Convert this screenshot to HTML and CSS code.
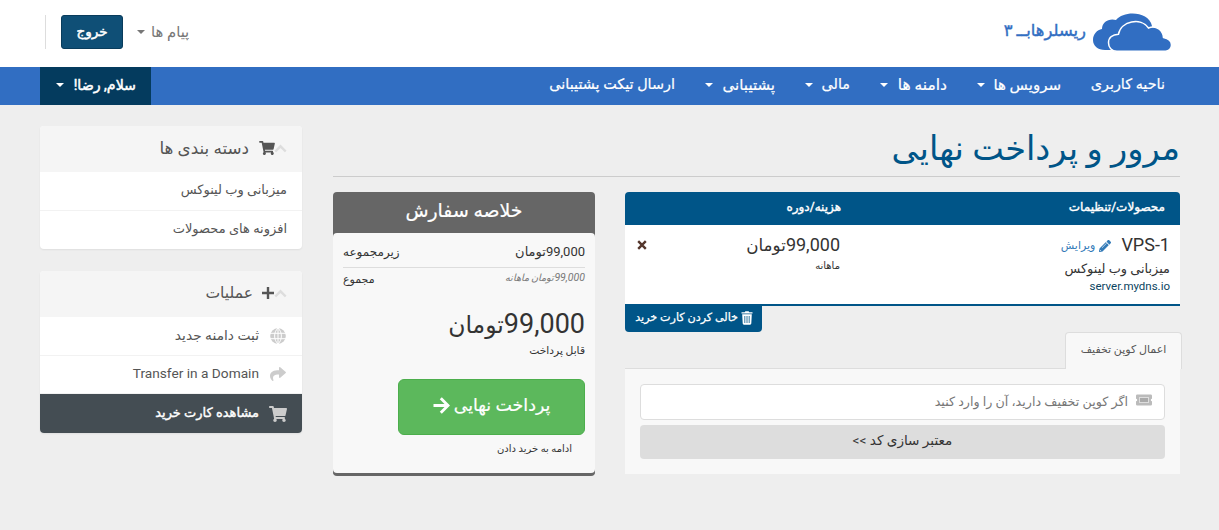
FILE: index.html
```html
<!DOCTYPE html>
<html lang="fa" dir="rtl">
<head>
<meta charset="utf-8">
<title>مرور و پرداخت نهایی</title>
<link rel="stylesheet" href="styles.css">
</head>
<body>
<svg class="defs" width="0" height="0">
  <symbol id="cart" viewBox="0 0 576 512"><path d="M528.12 301.319l47.273-208C578.806 78.301 567.391 64 551.99 64H159.208l-9.166-44.81C147.758 8.021 137.93 0 126.529 0H24C10.745 0 0 10.745 0 24v16c0 13.255 10.745 24 24 24h69.883l70.248 343.435C147.325 417.1 136 435.222 136 456c0 30.928 25.072 56 56 56s56-25.072 56-56c0-15.674-6.447-29.835-16.824-40h209.647C430.447 426.165 424 440.326 424 456c0 30.928 25.072 56 56 56s56-25.072 56-56c0-22.172-12.888-41.332-31.579-50.405l5.517-24.276c3.413-15.018-8.002-29.319-23.403-29.319H218.117l-6.545-32h293.145c11.206 0 20.92-7.754 23.403-18.681z"/></symbol>
  <symbol id="up" viewBox="0 0 13 9"><path d="M1.300 7.500 6.500 2.300l5.200 5.200" fill="none" stroke="currentColor" stroke-width="2.400"/></symbol>
</svg>
<header class="header">
  <div class="container header-row">
    <div class="brand">
      <svg class="clouds" viewBox="0 0 80 39"><path d="M1 27c0-6 4-10 9-11 0-7 7-11 14-9C32-3 57-2 60 13L56 30 19 37H13C6 37 1 33 1 27Z"/><path class="front" d="M25 38.300c-5.500 0-8.500-4-8.500-8.600 0-5 4-8.200 10-8.500C29 8 49 4 56.500 15c8-3 14.500 2.500 15 9.500 5 1 8 3.500 8 7.500s-3 6.300-6 6.300Z"/></svg>
      <span class="brand-name">ریسلرهابــ ۳</span>
    </div>
    <div class="top-nav">
      <a class="messages"><span>پیام ها</span><i class="caret"></i></a>
      <a class="logout"><span>خروج</span></a>
    </div>
  </div>
</header>
<nav class="nav">
  <div class="container nav-row">
    <ul class="menu">
      <li class="m-home"><span>ناحیه کاربری</span></li>
      <li class="m-services"><span>سرویس ها</span><i class="caret"></i></li>
      <li class="m-domains"><span>دامنه ها</span><i class="caret"></i></li>
      <li class="m-billing"><span>مالی</span><i class="caret"></i></li>
      <li class="m-support"><span>پشتیبانی</span><i class="caret"></i></li>
      <li class="m-ticket"><span>ارسال تیکت پشتیبانی</span></li>
    </ul>
    <div class="account"><span>سلام, رضا!</span><i class="caret"></i></div>
  </div>
</nav>
<main class="container page">
  <section class="checkout">
    <h1 class="title"><span>مرور و پرداخت نهایی</span></h1>
    <div class="columns">
      <div class="cart">
        <div class="cart-head"><span class="c1">محصولات/تنظیمات</span><span class="c2">هزینه/دوره</span></div>
        <div class="cart-row">
          <div class="product">
            <div class="name-line"><span class="name">VPS-1</span><a class="edit"><svg viewBox="0 0 512 512"><path d="M498 142l-45 45c-5 5-12 5-17 0L325 76c-5-5-5-12 0-17l45-45c19-19 49-19 68 0l60 60c19 19 19 49 0 68zM285 99L22 362 0 484c-3 17 11 31 28 28l122-22 263-263c5-5 5-12 0-17L302 99c-5-5-13-5-17 0z"/><path class="groove" d="M125 335 330 130M42 425l45 45" /></svg><span>ویرایش</span></a></div>
            <div class="group">میزبانی وب لینوکس</div>
            <div class="domain">server.mydns.io</div>
          </div>
          <div class="price"><div class="amount">99,000<span class="unit">تومان</span></div><div class="cycle">ماهانه</div></div>
          <svg class="remove" viewBox="0 0 10 10"><path d="M1.200 1.200l7.600 7.600M8.800 1.200 1.200 8.800"/></svg>
        </div>
        <div class="empty-row"><a class="empty"><svg viewBox="0 0 12 14"><path d="M.5 1.300h3.200L4.400.3h3.200l.7 1h3.200v1.200H.5zM1.200 3.300h9.600l-.5 9.300q-.1 1.100-1.200 1.100H2.900q-1.100 0-1.200-1.100z"/><path class="bars" d="M3.800 5v7M6 5v7M8.200 5v7"/></svg><span>خالی کردن کارت خرید</span></a></div>
        <div class="tabs"><div class="tab"><span>اعمال کوپن تخفیف</span></div></div>
        <div class="coupon">
          <div class="field"><svg viewBox="0 0 16 12"><path d="M1.300.5h13.400q1.300 0 1.300 1.300v3a1.200 1.200 0 0 0 0 2.400v3q0 1.300-1.300 1.300H1.300Q0 11.500 0 10.200v-3a1.200 1.200 0 0 0 0-2.400v-3Q0 .5 1.300.5z"/><rect x="3.500" y="3.500" width="9" height="5" fill="#aaa" stroke="#ddd" stroke-width="1"/></svg><span>اگر کوپن تخفیف دارید، آن را وارد کنید</span></div>
          <div class="validate"><span>معتبر سازی کد &gt;&gt;</span></div>
        </div>
      </div>
      <aside class="summary">
        <h2><span>خلاصه سفارش</span></h2>
        <div class="summary-body">
          <div class="line subtotal"><span>99,000تومان</span><span class="label">زیرمجموعه</span></div>
          <div class="line recurring"><em>99,000<span class="unit">تومان ماهانه</span></em><span class="label">مجموع</span></div>
          <div class="total">99,000<span class="unit">تومان</span></div>
          <div class="due">قابل پرداخت</div>
          <a class="pay"><span>پرداخت نهایی</span><svg viewBox="0 0 17 17"><path d="M.5 8.500h14M7.800 1.300l7.200 7.200-7.200 7.200"/></svg></a>
          <div class="continue">ادامه به خرید دادن</div>
        </div>
      </aside>
    </div>
  </section>
  <aside class="sidebar">
    <div class="panel">
      <h3><svg class="chev"><use href="#up"/></svg><svg class="head-cart"><use href="#cart"/></svg><span>دسته بندی ها</span></h3>
      <div class="item"><span>میزبانی وب لینوکس</span></div>
      <div class="item"><span>افزونه های محصولات</span></div>
    </div>
    <div class="panel actions">
      <h3><svg class="chev"><use href="#up"/></svg><svg class="plus" viewBox="0 0 12 12"><path d="M6 0v12M0 6h12"/></svg><span>عملیات</span></h3>
      <div class="item"><svg class="ico globe" viewBox="0 0 16 16"><circle cx="8" cy="8" r="7.800"/><path d="M0 5.300h16M0 10.700h16M8 0v16M8 0C3.500 4 3.500 12 8 16M8 0c4.500 4 4.500 12 0 16"/></svg><span class="register">ثبت دامنه جدید</span></div>
      <div class="item"><svg class="ico" viewBox="0 0 512 512"><path d="M503.700 189.800l-176-152C312.300 24.500 288 35.300 288 56v80C127.400 137.900 0 170.100 0 322.300c0 61.400 39.600 122.300 83.300 154.100 13.700 9.900 33.100-2.500 28.100-18.600C66.100 312.800 132.900 274.300 288 272.100V360c0 20.700 24.300 31.500 39.700 18.200l176-152c11.100-9.600 11.100-26.800 0-36.400z"/></svg><span class="latin">Transfer in a Domain</span></div>
      <div class="item active"><svg class="ico"><use href="#cart"/></svg><span>مشاهده کارت خرید</span></div>
    </div>
  </aside>
</main>
</body>
</html>
```
FILE: styles.css
```css
* { box-sizing: border-box; }
body { margin: 0; background: #eee; color: #333; font-family: Roboto, "DejaVu Sans", sans-serif; font-size: 14px; line-height: 20px; }
h1, h2, h3, ul { margin: 0; padding: 0; font-weight: 400; list-style: none; }
span, div { white-space: nowrap; }
svg { display: block; flex: none; fill: currentColor; }
.defs { position: absolute; }
.container { width: 1140px; margin-right: 39px; }
.caret { border: 4px solid transparent; border-top-color: currentColor; border-bottom: 0; }

.header { background: #fff; height: 67px; }
.header-row { display: flex; justify-content: space-between; }
.brand { display: flex; gap: 6px; padding: 13px 8px 0 0; color: #316ec2; }
.clouds { width: 80px; height: 39px; }
.front { stroke: #fff; stroke-width: 1.500; }
.brand-name { font-size: 16.400px; line-height: 20px; padding-top: 8px; -webkit-text-stroke: .4px; }
.top-nav { display: flex; height: 34px; margin-top: 15px; padding-left: 15px; border-left: 1px solid #ddd; margin-left: 5px; gap: 14px; }
.messages { display: flex; align-items: center; gap: 6px; color: #777; font-size: 14.800px; }
.logout { width: 62px; background: #0f4f76; border: 1px solid #093c5c; border-radius: 3px; color: #fff; text-align: center; line-height: 31px; font-size: 13.500px; -webkit-text-stroke: .5px; }

.nav { background: #316ec2; height: 38px; color: #fff; }
.nav-row { display: flex; justify-content: space-between; }
.menu { display: flex; }
.menu li { display: flex; align-items: center; justify-content: space-between; height: 35px; padding: 0 15px; font-size: 14.400px; -webkit-text-stroke: .2px; }
.m-home { width: 104px; }
.m-services { width: 114px; }
.menu .m-services { font-size: 15px; }
.m-domains { width: 97px; }
.menu .m-domains { font-size: 15.500px; }
.m-billing { width: 75px; }
.m-support { width: 100px; }
.menu .m-support { font-size: 15px; }
.m-ticket { width: 156px; }
.account { display: flex; align-items: center; gap: 10px; height: 38px; width: 111px; padding: 0 15px 3px; background: #043b5e; font-size: 14.200px; -webkit-text-stroke: .5px; }

.page { display: flex; gap: 31px; padding-top: 21px; }
.checkout { width: 847px; }
.title { height: 51px; border-bottom: 1px solid #ccc; margin-bottom: 15px; color: #058; font-size: 33.600px; line-height: 45px; }
.columns { display: flex; gap: 30px; align-items: flex-start; }
.cart { width: 555px; }
.cart-head { display: flex; height: 33px; padding: 0 15px; background: #058; color: #fff; border-radius: 4px 4px 0 0; font-size: 12px; line-height: 31px; -webkit-text-stroke: .4px; }
.c1 { width: 324px; }
.cart-row { display: flex; height: 81px; padding: 10px 10px 0; background: #fff; border-bottom: 2px solid #058; }
.product { width: 330px; }
.name-line { display: flex; align-items: center; gap: 10px; height: 20px; }
.name { font-size: 18px; }
.edit { display: flex; align-items: center; gap: 4px; color: #337ab7; font-size: 11px; padding-top: 1px; }
.edit svg { width: 12px; height: 12px; }
.groove { fill: none; stroke: #fff; stroke-width: 28; }
.group { font-size: 12.900px; line-height: 18px; margin-top: 5px; }
.domain { font-size: 11.500px; line-height: 14px; color: #0b4461; margin-top: 1px; }
.price { width: 190px; }
.amount { font-size: 18px; line-height: 20px; }
.amount .unit { font-size: .93em; }
.cycle { font-size: 10px; line-height: 14px; margin-top: 4px; }
.remove { width: 10px; height: 10px; margin-top: 5px; stroke: #54362c; stroke-width: 2.400; margin-right: 3px; }
.empty-row { display: flex; justify-content: flex-end; height: 26px; }
.empty { display: flex; align-items: center; gap: 3px; width: 137px; padding: 0 9px 2px 0; background: #058; border-radius: 0 0 4px 4px; color: #fff; font-size: 11.200px; -webkit-text-stroke: .25px; }
.empty svg { width: 12px; height: 14px; }
.bars { stroke: #058; stroke-width: .8; }
.tabs { display: flex; height: 37px; border-bottom: 1px solid #ddd; margin-right: -2px; }
.tab { width: 117px; height: 37px; border: 1px solid #ddd; border-bottom: 0; border-radius: 4px 4px 0 0; background: #f8f8f8; color: #555; text-align: center; font-size: 11px; line-height: 34px; }
.coupon { height: 105px; padding: 15px; background: #f8f8f8; }
.field { display: flex; align-items: center; gap: 8px; height: 36px; padding: 0 12px 1px; background: #fff; border: 1px solid #ddd; border-radius: 4px; color: #777; font-size: 12.700px; }
.field svg { width: 16px; height: 12px; fill: #bbb; margin-top: -3px; }
.validate { height: 34px; margin-top: 5px; background: #ddd; border-radius: 4px; color: #333; text-align: center; font-size: 13.600px; line-height: 31px; }

.summary { width: 262px; height: 284px; background: #666; border-bottom: 3px solid #666; border-radius: 4px; }
.summary h2 { height: 41px; color: #fff; text-align: center; font-size: 18.900px; line-height: 38px; -webkit-text-stroke: .2px; }
.summary-body { height: 240px; padding: 10px; background: #f8f8f8; border-radius: 4px; }
.line { display: flex; justify-content: space-between; }
.subtotal { height: 25px; border-bottom: 1px solid #ddd; line-height: 18px; font-size: 13px; }
.subtotal .label { font-size: 12px; line-height: 19px; }
.recurring { height: 22px; line-height: 20px; font-size: 11px; }
.recurring em { color: #777; font-size: 10.500px; }
.recurring .unit { font-size: .93em; }
.recurring .label { line-height: 24px; }
.total { font-size: 27px; line-height: 36px; height: 36px; margin-top: 16px; }
.total .unit { font-size: .87em; }
.due { font-size: 10.700px; line-height: 17px; height: 16px; }
.pay { display: flex; align-items: center; justify-content: center; gap: 4px; width: 187px; height: 56px; margin-top: 21px; padding-bottom: 4px; background: #5cb85c; border: 1px solid #4cae4c; border-radius: 6px; color: #fff; font-size: 17.400px; -webkit-text-stroke: .2px; }
.pay svg { width: 17px; height: 17px; fill: none; stroke: #fff; stroke-width: 2.900; }
.continue { font-size: 10px; line-height: 17px; padding-right: 13px; margin-top: 5px; }

.sidebar { width: 262px; }
.panel { height: 123px; overflow: hidden; margin-bottom: 22px; border-radius: 4px; background: #fff; box-shadow: 0 1px 2px #0001; color: #555; }
.actions { height: 162px; }
.panel h3 { display: flex; align-items: center; height: 46px; padding: 0 15px 2px; background: #f5f5f5; font-size: 16.800px; }
.actions h3 { font-size: 15.600px; }
.chev { width: 13px; height: 9px; color: #ddd; }
.head-cart { width: 16px; height: 14px; margin-left: 10px; margin-right: -1px; }
.plus { width: 12px; height: 12px; margin-left: 9px; stroke: #555; stroke-width: 2.400; }
.item { display: flex; align-items: center; gap: 10px; height: 38.500px; padding: 0 15px 2px; border-bottom: 1px solid #f2f2f2; font-size: 13px; }
.item:last-child { border: 0; height: 39px; }
.ico { width: 18px; height: 16px; color: #ccc; margin-top: 2px; }
.globe path { fill: none; stroke: #fff; stroke-width: 1; }
.item .register { font-size: 13.800px; }
.latin { font-size: 13.700px; }
.item.active { background: #444d53; color: #fff; -webkit-text-stroke: .4px; }
```
